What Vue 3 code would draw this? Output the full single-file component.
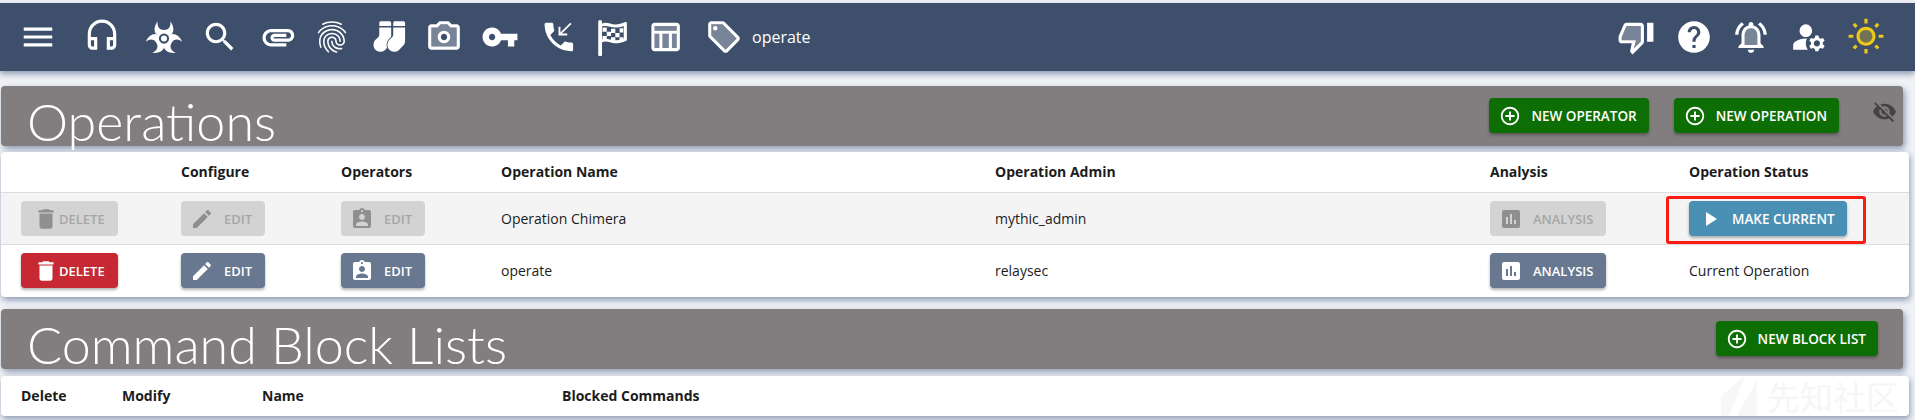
<script setup>
// material style icon paths, op = fill opacity for the two tone ones, t = transform, s = outline colour
const bioLobe = 'M8 2C5 6 5.5 10.5 9.23 11.4A3.2 3.2 0 0 1 14.77 11.4C18.5 10.5 19 6 16 2 16.5 5.5 14.8 7.5 12 7.5 9.2 7.5 7.5 5.5 8 2z';
const sock = 'M6.5 6H14v8.500c0 1.200-.5 2.300-1.300 3.100l-2.700 2.700a4.400 4.400 0 0 1-6.200-6.200l2-2c.5-.5.7-1.100.7-1.700zM7.500 2h5.500a1 1 0 0 1 1 1v2H6.500V3a1 1 0 0 1 1-1z';

const I = {
  menu: [{ d: 'M3 18h18v-2H3v2zm0-5h18v-2H3v2zm0-7v2h18V6H3z' }],
  headset: [{ d: 'M12 1c-4.97 0-9 4.03-9 9v7c0 1.66 1.34 3 3 3h3v-8H5v-2c0-3.87 3.13-7 7-7s7 3.13 7 7v2h-4v8h3c1.66 0 3-1.34 3-3v-7c0-4.97-4.03-9-9-9zM7 14v4H6c-.55 0-1-.45-1-1v-3h2zm12 3c0 .55-.45 1-1 1h-1v-4h2v3z' }],
  bio: [
    { d: bioLobe, t: 'rotate(0 12 13)' },
    { d: bioLobe, t: 'rotate(120 12 13)' },
    { d: bioLobe, t: 'rotate(240 12 13)' },
    { d: 'M12 11.100a1.900 1.900 0 1 0 0 3.800 1.900 1.900 0 0 0 0-3.800z' },
  ],
  search: [{ d: 'M15.5 14h-.79l-.28-.27C15.41 12.59 16 11.11 16 9.5 16 5.91 13.09 3 9.5 3S3 5.91 3 9.5 5.91 16 9.5 16c1.61 0 3.09-.59 4.23-1.57l.27.28v.79l5 4.99L20.49 19l-4.99-5zm-6 0C7.01 14 5 11.99 5 9.5S7.01 5 9.5 5 14 7.01 14 9.5 11.99 14 9.5 14z' }],
  clip: [{ d: 'M2 12.5C2 9.46 4.46 7 7.5 7H18c2.21 0 4 1.79 4 4s-1.79 4-4 4H9.5C8.12 15 7 13.88 7 12.5S8.12 10 9.5 10H17v2H9.41c-.55 0-.55 1 0 1H18c1.1 0 2-.9 2-2s-.9-2-2-2H7.5C5.57 9 4 10.57 4 12.5S5.57 16 7.5 16H17v2H7.5C4.46 18 2 15.54 2 12.5z', t: 'translate(1.500 0)' }],
  finger: [{ d: 'M17.81 4.47c-.08 0-.16-.02-.23-.06C15.66 3.42 14 3 12.01 3c-1.98 0-3.86.47-5.57 1.41-.24.13-.54.04-.68-.2-.13-.24-.04-.55.2-.68C7.82 2.52 9.86 2 12.01 2c2.13 0 3.99.47 6.03 1.52.25.13.34.43.21.67-.09.18-.26.28-.44.28zM3.5 9.72c-.1 0-.2-.03-.29-.09-.23-.16-.28-.47-.12-.7.99-1.4 2.25-2.5 3.75-3.27C9.98 4.04 14 4.03 17.15 5.65c1.5.77 2.76 1.86 3.75 3.25.16.22.11.54-.12.7-.23.16-.54.11-.7-.12-.9-1.26-2.04-2.25-3.39-2.94-2.87-1.47-6.54-1.47-9.4.01-1.36.7-2.5 1.7-3.4 2.96-.08.14-.23.21-.39.21zm6.25 12.07c-.13 0-.26-.05-.35-.15-.87-.87-1.34-1.43-2.01-2.64-.69-1.23-1.05-2.73-1.05-4.34 0-2.97 2.54-5.39 5.66-5.39s5.66 2.42 5.66 5.39c0 .28-.22.5-.5.5s-.5-.22-.5-.5c0-2.42-2.09-4.39-4.66-4.39-2.57 0-4.66 1.97-4.66 4.39 0 1.44.32 2.77.93 3.85.64 1.15 1.08 1.64 1.85 2.42.19.2.19.51 0 .71-.11.1-.24.15-.37.15zm7.17-1.85c-1.19 0-2.24-.3-3.1-.89-1.49-1.01-2.38-2.65-2.38-4.39 0-.28.22-.5.5-.5s.5.22.5.5c0 1.41.72 2.74 1.94 3.56.71.48 1.54.71 2.54.71.24 0 .64-.03 1.04-.1.27-.05.53.13.58.41.05.27-.13.53-.41.58-.57.11-1.07.12-1.21.12zM14.91 22c-.04 0-.09-.01-.13-.02-1.59-.44-2.63-1.03-3.72-2.1-1.4-1.39-2.17-3.24-2.17-5.22 0-1.62 1.38-2.94 3.08-2.94 1.7 0 3.08 1.32 3.08 2.94 0 1.07.93 1.94 2.08 1.94s2.08-.87 2.08-1.94c0-3.77-3.25-6.83-7.25-6.83-2.84 0-5.44 1.58-6.61 4.03-.39.81-.59 1.76-.59 2.8 0 .78.07 2.01.67 3.61.1.26-.03.55-.29.64-.26.1-.55-.04-.64-.29-.49-1.31-.73-2.61-.73-3.96 0-1.2.23-2.29.68-3.24 1.33-2.79 4.28-4.6 7.51-4.6 4.55 0 8.25 3.51 8.25 7.83 0 1.62-1.38 2.94-3.08 2.94s-3.08-1.32-3.08-2.94c0-1.07-.93-1.94-2.08-1.94s-2.08.87-2.08 1.94c0 1.71.66 3.31 1.87 4.51.95.94 1.86 1.46 3.27 1.85.27.07.42.35.35.61-.05.23-.26.38-.47.38z' }],
  socks: [
    { d: sock },
    { d: sock, t: 'translate(8.800 0)', s: '#3e4f6b' },
  ],
  camera: [
    { d: 'M20 4h-3.17L15 2H9L7.17 4H4c-1.1 0-2 .9-2 2v12c0 1.1.9 2 2 2h16c1.1 0 2-.9 2-2V6c0-1.1-.9-2-2-2zm0 14H4V6h4.05l1.83-2h4.24l1.83 2H20v12zM12 8c-2.21 0-4 1.79-4 4s1.79 4 4 4 4-1.79 4-4-1.79-4-4-4zm0 6c-1.1 0-2-.9-2-2s.9-2 2-2 2 .9 2 2-.9 2-2 2z' },
    { d: 'M15.95 6l-1.83-2H9.88L8.05 6H4v12h16V6h-4.05zM12 16c-2.21 0-4-1.79-4-4s1.79-4 4-4 4 1.79 4 4-1.79 4-4 4z', op: 0.3 },
  ],
  key: [{ d: 'M12.65 10C11.83 7.67 9.61 6 7 6c-3.31 0-6 2.69-6 6s2.69 6 6 6c2.61 0 4.83-1.67 5.65-4H17v4h4v-4h2v-4H12.65zM7 14c-1.1 0-2-.9-2-2s.9-2 2-2 2 .9 2 2-.9 2-2 2z' }],
  phone: [{ d: 'M20 15.5c-1.25 0-2.45-.2-3.57-.57-.35-.11-.74-.03-1.02.24l-2.2 2.2c-2.83-1.44-5.15-3.75-6.59-6.59l2.2-2.21c.28-.27.36-.66.25-1.01C8.7 6.45 8.5 5.25 8.5 4c0-.55-.45-1-1-1H4c-.55 0-1 .45-1 1 0 9.39 7.61 17 17 17 .55 0 1-.45 1-1v-3.5c0-.55-.45-1-1-1zM20 3.800 19.200 3 13 9.200V5.500h-1.200V11h5.500V9.800h-3.400z', t: 'translate(1.800 0)' }],
  flag: [
    { d: 'M3.300 2.500a1.200 1.200 0 0 1 2.400 0V23a1.200 1.200 0 0 1-2.400 0zM5.700 3.500c3-1.300 5.300.6 8.300.6 2.200 0 4.200-.6 6.400-1.500.6-.2 1 .1 1 .7v10.400c0 .4-.2.7-.6.8-2.300 1-4.600 1.500-6.800 1.500-3 0-5.300-1.900-8.300-.7v-1.900c3-1 5.300.7 8.300.7 1.700 0 3.500-.4 5.400-1.100V5c-1.800.7-3.600 1-5.400 1-3 0-5.300-1.700-8.300-.7z' },
    { d: 'M6 6h2.700v2.700H6zM11.400 6.800h2.700v2.700h-2.700zM16.800 6.500h2.300v2.700h-2.300zM8.700 8.700h2.700v2.700H8.700zM14.100 9.500h2.700v2.700h-2.700zM6 11.400h2.700v2.400H6zM11.400 12.200h2.700v2.400h-2.700zM16.800 12.200h2.300v1.800h-2.300z' },
  ],
  table: [
    { d: 'M19 3H5c-1.1 0-2 .9-2 2v14c0 1.1.9 2 2 2h14c1.1 0 2-.9 2-2V5c0-1.100-.9-2-2-2zm0 2v3H5V5h14zm0 5v9h-3v-9h3zM5 10h3v9H5v-9zm5 0h4v9h-4v-9z', t: 'translate(-1.500 0)' },
    { d: 'M5 5h14v3H5zM5 10h3v9H5zM10 10h4v9h-4zM16 10h3v9h-3z', op: 0.3, t: 'translate(-1.500 0)' },
  ],
  tag: [
    { d: 'M21.41 11.58l-9-9C12.05 2.22 11.55 2 11 2H4c-1.1 0-2 .9-2 2v7c0 .55.22 1.05.59 1.42l9 9c.36.36.86.58 1.41.58s1.05-.22 1.41-.59l7-7c.37-.36.59-.86.59-1.41s-.23-1.06-.59-1.42zM13 20.01L4 11V4h7v-.01l9 9-7 7.02zM6.5 5a1.5 1.5 0 1 0 0 3 1.5 1.5 0 0 0 0-3z' },
    { d: 'M11 4H4v7l9 9.01L20 13l-9-9zM6.5 8C5.67 8 5 7.33 5 6.5S5.67 5 6.5 5 8 5.67 8 6.5 7.33 8 6.5 8z', op: 0.3 },
  ],
  thumb: [
    { d: 'M15 3H6c-.83 0-1.54.5-1.84 1.22l-3.02 7.05c-.09.23-.14.47-.14.73v2c0 1.1.9 2 2 2h6.31l-.95 4.57-.03.32c0 .41.17.79.44 1.06L9.83 23l6.59-6.59c.36-.36.58-.86.58-1.41V5c0-1.1-.9-2-2-2zm0 12l-4.34 4.34L12 14H3v-2l3-7h9v10zm4-12h4v12h-4z' },
    { d: 'M3 12v2h9l-1.34 5.34L15 15V5H6z', op: 0.3 },
  ],
  help: [{ d: 'M12 2C6.48 2 2 6.48 2 12s4.48 10 10 10 10-4.48 10-10S17.52 2 12 2zm1 17h-2v-2h2v2zm2.07-7.75l-.9.92C13.45 12.9 13 13.5 13 15h-2v-.5c0-1.1.45-2.1 1.17-2.83l1.24-1.26c.37-.36.59-.86.59-1.41 0-1.1-.9-2-2-2s-2 .9-2 2H8c0-2.21 1.79-4 4-4s4 1.79 4 4c0 .88-.36 1.68-.93 2.25z' }],
  bell: [
    { d: 'M7.58 4.08L6.15 2.65C3.75 4.48 2.17 7.3 2.03 10.5h2c.15-2.65 1.51-4.97 3.55-6.42zm12.39 6.42h2c-.15-3.2-1.73-6.02-4.12-7.85l-1.42 1.43c2.02 1.45 3.39 3.77 3.54 6.42zM18 11c0-3.07-1.64-5.64-4.5-6.32V4c0-.83-.67-1.5-1.5-1.5s-1.5.67-1.5 1.5v.68C7.63 5.36 6 7.92 6 11v5l-2 2v1h16v-1l-2-2v-5zm-2 6H8v-6c0-2.48 1.51-4.5 4-4.5s4 2.02 4 4.5v6zm-4 5c.14 0 .27-.01.4-.04.65-.14 1.18-.58 1.44-1.18.1-.24.15-.5.15-.78h-4c.01 1.1.9 2 2.01 2z' },
    { d: 'M12 6.5c-2.49 0-4 2.02-4 4.5v6h8v-6c0-2.48-1.51-4.5-4-4.5z', op: 0.3 },
  ],
  manage: [{ d: 'M10.67 13.02C10.45 13.01 10.23 13 10 13c-2.42 0-4.68.67-6.61 1.82-.88.52-1.39 1.5-1.39 2.53V20h9.26c-.79-1.13-1.26-2.51-1.26-4 0-1.07.25-2.07.67-2.98zM10 4a4 4 0 1 0 0 8 4 4 0 0 0 0-8zM20.75 16c0-.22-.03-.42-.06-.63l1.14-1.01-1-1.73-1.45.49c-.32-.27-.68-.48-1.08-.63L18 11h-2l-.3 1.49c-.4.15-.76.36-1.08.63l-1.45-.49-1 1.73 1.14 1.01c-.03.21-.06.41-.06.63s.03.42.06.63l-1.14 1.01 1 1.73 1.45-.49c.32.27.68.48 1.08.63L16 21h2l.3-1.49c.4-.15.76-.36 1.08-.63l1.45.49 1-1.73-1.14-1.01c.03-.21.06-.41.06-.63zM17 18c-1.1 0-2-.9-2-2s.9-2 2-2 2 .9 2 2-.9 2-2 2z' }],
  sun: [
    { d: 'M6.76 4.84l-1.8-1.79-1.41 1.41 1.79 1.79zM1 10.5h3v2H1zM11 .55h2V3.5h-2zm8.04 2.495l1.408 1.407-1.79 1.79-1.407-1.408zm-1.8 15.115l1.79 1.8 1.41-1.41-1.8-1.79zM20 10.5h3v2h-3zm-8-5c-3.31 0-6 2.69-6 6s2.69 6 6 6 6-2.69 6-6-2.69-6-6-6zm0 10c-2.21 0-4-1.79-4-4s1.79-4 4-4 4 1.79 4 4-1.79 4-4 4zm-1 4h2v2.95h-2zm-7.45-.96l1.41 1.41 1.79-1.8-1.41-1.41z' },
    { d: 'M12 7.5a4 4 0 1 0 0 8 4 4 0 0 0 0-8z', op: 0.3 },
  ],
  eyeOff: [{ d: 'M12 7c2.76 0 5 2.24 5 5 0 .65-.13 1.26-.36 1.83l2.92 2.92c1.51-1.26 2.7-2.89 3.43-4.75-1.73-4.39-6-7.5-11-7.5-1.4 0-2.74.25-3.98.7l2.16 2.16C10.74 7.13 11.35 7 12 7zM2 4.27l2.28 2.28.46.46C3.08 8.3 1.78 10.02 1 12c1.73 4.39 6 7.5 11 7.5 1.55 0 3.03-.3 4.38-.84l.42.42L19.73 22 21 20.73 3.27 3 2 4.27zM7.53 9.8l1.55 1.55c-.05.21-.08.43-.08.65 0 1.66 1.34 3 3 3 .22 0 .44-.03.65-.08l1.55 1.55c-.67.33-1.41.53-2.2.53-2.76 0-5-2.24-5-5 0-.79.2-1.53.53-2.2zm4.31-.78l3.15 3.15.02-.16c0-1.66-1.34-3-3-3l-.17.01z' }],
  del: [{ d: 'M6 19c0 1.1.9 2 2 2h8c1.1 0 2-.9 2-2V7H6v12zM19 4h-3.5l-1-1h-5l-1 1H5v2h14V4z' }],
  edit: [{ d: 'M3 17.25V21h3.75L17.81 9.94l-3.75-3.75L3 17.25zM20.71 7.04c.39-.39.39-1.02 0-1.41l-2.34-2.34c-.39-.39-1.02-.39-1.41 0l-1.83 1.83 3.75 3.75 1.83-1.83z' }],
  badge: [{ d: 'M19 3h-4.18C14.4 1.84 13.3 1 12 1c-1.3 0-2.4.84-2.82 2H5c-1.1 0-2 .9-2 2v14c0 1.1.9 2 2 2h14c1.1 0 2-.9 2-2V5c0-1.1-.9-2-2-2zm-7 0c.55 0 1 .45 1 1s-.45 1-1 1-1-.45-1-1 .45-1 1-1zm0 4c1.66 0 3 1.34 3 3s-1.34 3-3 3-3-1.34-3-3 1.34-3 3-3zm6 12H6v-1.4c0-2 4-3.1 6-3.1s6 1.1 6 3.1V19z' }],
  chart: [{ d: 'M19 3H5c-1.1 0-2 .9-2 2v14c0 1.1.9 2 2 2h14c1.1 0 2-.9 2-2V5c0-1.1-.9-2-2-2zM9 17H7v-7h2v7zm4 0h-2V7h2v10zm4 0h-2v-4h2v4z' }],
  play: [{ d: 'M8 5v14l11-7z' }],
  add: [{ d: 'M13 7h-2v4H7v2h4v4h2v-4h4v-2h-4V7zm-1-5C6.48 2 2 6.48 2 12s4.48 10 10 10 10-4.48 10-10S17.52 2 12 2zm0 18c-4.41 0-8-3.59-8-8s3.59-8 8-8 8 3.59 8 8-3.59 8-8 8z' }],
};

const leftIcons = [I.headset, I.bio, I.search, I.clip, I.finger, I.socks, I.camera, I.key, I.phone, I.flag, I.table, I.tag];
const rightIcons = [I.thumb, I.help, I.bell, I.manage, I.sun];

const rows = [
  { name: 'Operation Chimera', admin: 'mythic_admin', off: true },
  { name: 'operate', admin: 'relaysec', off: false },
];
</script>

<template>
  <div class="page">
    <header class="topbar">
      <button class="menu-btn">
        <svg class="ico-top" viewBox="0 0 24 24"><path :d="I.menu[0].d" /></svg>
      </button>
      <button v-for="(ic, i) in leftIcons" :key="i" class="top-btn">
        <svg class="ico-top" viewBox="0 0 24 24">
          <path v-for="(p, n) in ic" :key="n" :d="p.d" :transform="p.t" :opacity="p.op" :stroke="p.s" stroke-width="1" paint-order="stroke" />
        </svg>
      </button>
      <span class="op-name">operate</span>
      <div class="top-right">
        <button v-for="(ic, i) in rightIcons" :key="i" class="top-btn right" :class="{ sun: ic === I.sun }">
          <svg class="ico-top" viewBox="0 0 24 24">
            <path v-for="(p, n) in ic" :key="n" :d="p.d" :opacity="p.op" />
          </svg>
        </button>
      </div>
    </header>

    <section class="sec-head first">
      <h1>Operations</h1>
      <div class="head-actions">
        <button class="btn green">
          <svg class="i22" viewBox="0 0 24 24"><path :d="I.add[0].d" /></svg>New Operator
        </button>
        <button class="btn green">
          <svg class="i22" viewBox="0 0 24 24"><path :d="I.add[0].d" /></svg>New Operation
        </button>
        <svg class="eye" viewBox="0 0 24 24"><path :d="I.eyeOff[0].d" /></svg>
      </div>
    </section>

    <div class="card">
      <div class="row ops heading">
        <span></span>
        <span>Configure</span>
        <span>Operators</span>
        <span>Operation Name</span>
        <span>Operation Admin</span>
        <span>Analysis</span>
        <span>Operation Status</span>
      </div>
      <div v-for="r in rows" :key="r.name" class="row ops body" :class="{ shaded: r.off }">
        <div>
          <button class="btn del-btn" :class="r.off ? 'off' : 'red'">
            <svg class="i26" viewBox="0 0 24 24"><path :d="I.del[0].d" /></svg>Delete
          </button>
        </div>
        <div>
          <button class="btn" :class="r.off ? 'off' : 'slate'">
            <svg class="i24" viewBox="0 0 24 24"><path :d="I.edit[0].d" /></svg>Edit
          </button>
        </div>
        <div>
          <button class="btn" :class="r.off ? 'off' : 'slate'">
            <svg class="i24" viewBox="0 0 24 24"><path :d="I.badge[0].d" /></svg>Edit
          </button>
        </div>
        <span>{{ r.name }}</span>
        <span>{{ r.admin }}</span>
        <div>
          <button class="btn" :class="r.off ? 'off' : 'slate'">
            <svg class="i24" viewBox="0 0 24 24"><path :d="I.chart[0].d" /></svg>Analysis
          </button>
        </div>
        <div v-if="r.off" class="marked">
          <button class="btn blue">
            <svg class="i24" viewBox="0 0 24 24"><path :d="I.play[0].d" /></svg>Make Current
          </button>
          <span class="red-box"></span>
        </div>
        <span v-else>Current Operation</span>
      </div>
    </div>

    <section class="sec-head second">
      <h1>Command Block Lists</h1>
      <div class="head-actions block">
        <button class="btn green">
          <svg class="i22" viewBox="0 0 24 24"><path :d="I.add[0].d" /></svg>New Block List
        </button>
      </div>
    </section>

    <div class="card last">
      <div class="row blocks heading">
        <span>Delete</span>
        <span>Modify</span>
        <span>Name</span>
        <span>Blocked Commands</span>
      </div>
      <div class="mark">
        <svg class="mark-logo" viewBox="0 0 36 40"><path d="M0 40V20L24 0 8 40zM16 40 36 4v36z" /></svg>
        <span>先知社区</span>
      </div>
    </div>
  </div>
</template>

<style>
html, body {
  margin: 0;
  background: #eff1f5;
}
</style>

<style scoped>
.page {
  width: 1915px;
  height: 420px;
  overflow: hidden;
  padding-top: 3px;
  box-sizing: border-box;
  font-family: "Open Sans", "Noto Sans CJK SC", sans-serif;
  font-size: 14px;
  color: #1c1c1c;
}

.topbar {
  height: 68px;
  background: #3e4f6b;
  display: flex;
  align-items: center;
  padding: 0 20px 0 18px;
  box-shadow: 0 3px 6px #8c9ab3;
  color: #fff;
}

.topbar button {
  border: 0;
  background: none;
  padding: 0;
  color: inherit;
  display: flex;
  align-items: center;
  justify-content: center;
  height: 56px;
}

.menu-btn {
  width: 40px;
  margin-right: 16px;
}

.top-btn {
  width: 56px;
  flex: none;
}

/* headset sits closer to the menu than the other icons sit to each other */
.top-btn:nth-of-type(2) {
  margin-right: 6px;
}

.top-btn.right {
  width: 57.5px;
  margin-right: 0;
}

.topbar .top-btn.sun {
  color: #ecc81a;
}

.ico-top {
  width: 38px;
  height: 38px;
  fill: currentColor;
}

.op-name {
  font-size: 16px;
}

.top-right {
  margin-left: auto;
  display: flex;
}

.sec-head {
  margin: 15px 12px 0 1px;
  height: 60px;
  background: #827d7e;
  border-radius: 4px;
  box-shadow: 2px 3px 6px #8c9ab3;
  display: flex;
  align-items: flex-start;
  justify-content: space-between;
  color: #fff;
  padding-left: 26px;
}

.sec-head.second {
  margin-top: 12px;
}

.sec-head h1 {
  margin: 0;
  font-family: Lato, sans-serif;
  font-size: 52px;
  font-weight: 300;
  line-height: 70px;
  white-space: nowrap;
}

.head-actions {
  display: flex;
  align-items: flex-start;
  padding-top: 12px;
  gap: 25px;
  padding-right: 6px;
}

.head-actions.block {
  padding-right: 25px;
}

.eye {
  width: 25px;
  height: 25px;
  fill: #3a3a3a;
  margin: 1px 0 0 8px;
  opacity: .85;
}

.card {
  margin: 6px 6px 0 1px;
  background: #fff;
  border-radius: 4px;
  box-shadow: 1px 3px 6px #8c9ab3;
  position: relative;
}

.card.last {
  margin-top: 7px;
  height: 40px;
}

.row {
  display: grid;
  align-items: center;
  padding-left: 20px;
}

.row.ops {
  grid-template-columns: 160px 160px 160px 494px 495px 199px 1fr;
}

.row.blocks {
  grid-template-columns: 101px 140px 300px 1fr;
  height: 40px;
  box-sizing: border-box;
  padding-bottom: 2px;
}

.heading {
  font-weight: 700;
  font-size: 14px;
}

.ops.heading {
  height: 41px;
  box-sizing: border-box;
  border-bottom: 1px solid #dcdcdc;
  padding-bottom: 1px;
}

.ops.body {
  height: 52px;
  box-sizing: border-box;
}

.ops.body:last-child {
  padding-bottom: 1px;
}

.shaded {
  background: #f4f4f4;
  border-bottom: 1px solid #dcdcdc;
}

.btn {
  display: inline-flex;
  align-items: center;
  height: 35px;
  padding: 0 13px 0 9px;
  gap: 10px;
  border: 0;
  border-radius: 4px;
  font-family: inherit;
  font-size: 13px;
  font-weight: 600;
  text-transform: uppercase;
  color: #fff;
  white-space: nowrap;
  box-shadow: 0 2px 3px rgba(0, 0, 0, .3);
}

.btn svg {
  fill: currentColor;
  flex: none;
}

.i22 {
  width: 22px;
  height: 22px;
}

.i24 {
  width: 24px;
  height: 24px;
}

.i26 {
  width: 26px;
  height: 26px;
}

.del-btn {
  gap: 0;
  padding-left: 12px;
}

.green {
  background: #0e6e06;
  font-size: 13.5px;
  padding: 0 12px 0 10px;
}

.slate {
  background: #677890;
}

.red {
  background: #c62834;
}

.blue {
  background: #4a90b5;
  font-size: 13.5px;
  padding-right: 12px;
}

.off {
  background: #d3d3d3;
  color: #a6a6a6;
  box-shadow: none;
}

.off svg {
  fill: #8f8f8f;
}

.marked {
  position: relative;
  display: inline-flex;
  justify-self: start;
}

.red-box {
  position: absolute;
  inset: -5px -19px -8px -23px;
  border: 3px solid #fe1a14;
  border-radius: 3px;
  pointer-events: none;
}

.mark {
  position: absolute;
  right: 10px;
  top: 0;
  height: 40px;
  display: flex;
  align-items: center;
  gap: 10px;
  color: #f6f6f6;
  font-size: 33px;
  font-family: "Noto Sans CJK SC", sans-serif;
}

.mark-logo {
  width: 36px;
  height: 40px;
  fill: #f7f7f7;
}
</style>
